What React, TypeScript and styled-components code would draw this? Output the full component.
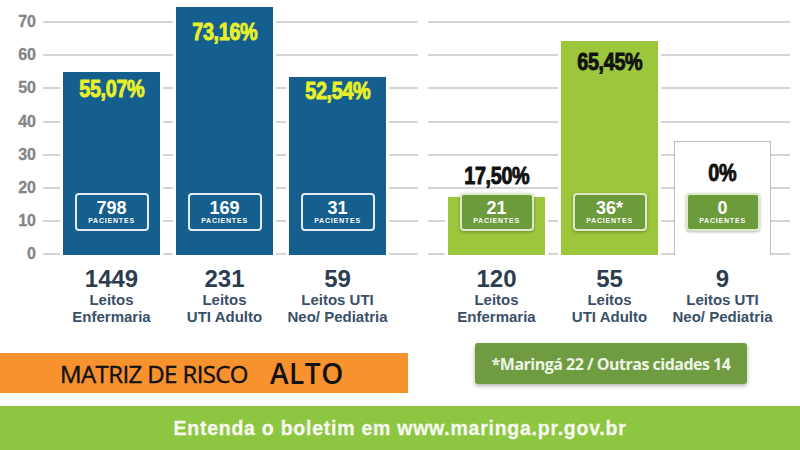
import styled, { createGlobalStyle } from "styled-components";

const GlobalStyle = createGlobalStyle`
  html, body {
    margin: 0;
    padding: 0;
    background: #fff;
  }
  body {
    font-family: "Liberation Sans", Arial, sans-serif;
  }
`;

type Tone = "blue" | "green" | "empty";

type BarData = {
  percent: string;
  height: number;
  labelTop: number;
  labelOutside?: boolean;
  patients: string;
  total: string;
  line1: string;
  line2: string;
};

const hospitalBeds: BarData[] = [
  { percent: "55,07%", height: 183, labelTop: 5, patients: "798", total: "1449", line1: "Leitos", line2: "Enfermaria" },
  { percent: "73,16%", height: 248, labelTop: 13, patients: "169", total: "231", line1: "Leitos", line2: "UTI Adulto" },
  { percent: "52,54%", height: 178, labelTop: 2, patients: "31", total: "59", line1: "Leitos UTI", line2: "Neo/ Pediatria" },
];

const privateBeds: BarData[] = [
  { percent: "17,50%", height: 58, labelTop: 0, labelOutside: true, patients: "21", total: "120", line1: "Leitos", line2: "Enfermaria" },
  { percent: "65,45%", height: 214, labelTop: 9, patients: "36*", total: "55", line1: "Leitos", line2: "UTI Adulto" },
  { percent: "0%", height: 114, labelTop: 19, patients: "0", total: "9", line1: "Leitos UTI", line2: "Neo/ Pediatria" },
];

const ticks = [70, 60, 50, 40, 30, 20, 10, 0];

const Styles = {
  Root: styled.div`
    width: 800px;
    height: 450px;
    overflow: hidden;
    display: flex;
    flex-direction: column;
    background: #fff;
  `,
  Charts: styled.section`
    display: flex;
    height: 325px;
  `,
  YAxis: styled.ul`
    list-style: none;
    margin: 0;
    padding: 5.75px 7px 0 0;
    width: 43px;
    box-sizing: border-box;
    height: 255px;
  `,
  Tick: styled.li`
    height: 33.1px;
    display: flex;
    align-items: center;
    justify-content: flex-end;
    font-size: 16px;
    font-weight: 700;
    color: #858585;
    -webkit-text-stroke: 0.3px #858585;
  `,
  Group: styled.div<{ $width: number; $gapRight: number }>`
    width: ${(p) => p.$width}px;
    margin-right: ${(p) => p.$gapRight}px;
    display: flex;
    flex-direction: column;
  `,
  Plot: styled.div`
    height: 255px;
    display: flex;
    gap: 16px;
    padding-left: 20px;
    background-image: repeating-linear-gradient(
      to top,
      #d4d4d4 0 2px,
      transparent 2px 33.1px
    );
  `,
  Slot: styled.div`
    width: 97px;
    flex: none;
    display: flex;
    flex-direction: column;
    justify-content: flex-end;
    align-items: center;
  `,
  Bar: styled.div<{ $tone: Tone }>`
    width: 100%;
    box-sizing: border-box;
    display: flex;
    flex-direction: column;
    justify-content: flex-end;
    align-items: center;
    background: ${(p) =>
      p.$tone === "blue" ? "#145f8d" : p.$tone === "green" ? "#9cc73d" : "#fff"};
    border: ${(p) => (p.$tone === "empty" ? "1.5px solid #bdbdbd" : "none")};
    border-bottom: none;
    box-shadow: ${(p) => (p.$tone === "empty" ? "none" : "0 0 0 3px #fff")};
  `,
  Percent: styled.div<{ $tone: Tone; $top: number }>`
    margin-top: ${(p) => p.$top}px;
    margin-bottom: auto;
    font-size: 23px;
    line-height: 24px;
    font-weight: 700;
    letter-spacing: -0.4px;
    white-space: nowrap;
    transform: scaleX(0.86);
    color: ${(p) => (p.$tone === "blue" ? "#e7f02a" : "#111")};
    -webkit-text-stroke: 0.9px ${(p) => (p.$tone === "blue" ? "#e7f02a" : "#111")};
  `,
  OuterPercent: styled.div`
    margin-bottom: 9px;
    font-size: 23px;
    line-height: 24px;
    font-weight: 700;
    letter-spacing: -0.4px;
    white-space: nowrap;
    transform: scaleX(0.86);
    color: #111;
    -webkit-text-stroke: 0.9px #111;
  `,
  PatientBox: styled.div<{ $tone: Tone }>`
    width: 74px;
    height: 38px;
    flex: none;
    box-sizing: border-box;
    margin-bottom: 24px;
    border-radius: 4px;
    border: 2px solid
      ${(p) => (p.$tone === "blue" ? "rgba(255,255,255,0.88)" : "rgba(240,248,228,0.85)")};
    background: ${(p) => (p.$tone === "blue" ? "transparent" : "#6b9b3b")};
    box-shadow: ${(p) => (p.$tone === "blue" ? "none" : "0 1px 3px rgba(0,0,0,0.3)")};
    display: flex;
    flex-direction: column;
    align-items: center;
    justify-content: center;
    color: #fff;
  `,
  PatientCount: styled.span`
    font-size: 18px;
    line-height: 16px;
    font-weight: 700;
  `,
  PatientLabel: styled.span`
    margin-top: 1px;
    font-size: 7px;
    line-height: 8px;
    font-weight: 900;
    letter-spacing: 0.8px;
  `,
  Captions: styled.div`
    display: flex;
    gap: 16px;
    padding-left: 20px;
  `,
  Caption: styled.div`
    width: 97px;
    flex: none;
    display: flex;
    flex-direction: column;
    align-items: center;
    white-space: nowrap;
    font-size: 15px;
    line-height: 17px;
    font-weight: 700;
    color: #3a5068;
  `,
  CaptionTotal: styled.span`
    margin-top: 12px;
    font-size: 24px;
    line-height: 24px;
    color: #2c3d4f;
  `,
  Notes: styled.section`
    margin-top: 18px;
    height: 50px;
    display: flex;
    align-items: flex-start;
  `,
  Risk: styled.div`
    width: 408px;
    height: 40px;
    margin-top: 10px;
    box-sizing: border-box;
    padding-left: 60px;
    display: flex;
    align-items: center;
    gap: 22px;
    background: #f7922f;
    color: #111;
    font-family: "Open Sans", "Liberation Sans", sans-serif;
  `,
  RiskTitle: styled.span`
    font-size: 24px;
    font-weight: 400;
    letter-spacing: -0.6px;
    -webkit-text-stroke: 0.4px #111;
  `,
  RiskLevel: styled.span`
    font-size: 28px;
    font-weight: 600;
    letter-spacing: 0.6px;
  `,
  Footnote: styled.div`
    margin-left: 67px;
    width: 272px;
    height: 41px;
    border-radius: 3px;
    background: #6f9c40;
    box-shadow: 0 2px 4px rgba(0, 0, 0, 0.3);
    display: flex;
    align-items: center;
    justify-content: center;
    color: #eef4e6;
    font-family: "Open Sans", "Liberation Sans", sans-serif;
    font-size: 16px;
    font-weight: 700;
    letter-spacing: -0.5px;
  `,
  Footer: styled.footer`
    margin-top: 13px;
    height: 44px;
    background: #8dc640;
    display: flex;
    align-items: center;
    justify-content: center;
    color: #f6f9f0;
    font-size: 19.5px;
    font-weight: 700;
    letter-spacing: 0.75px;
    -webkit-text-stroke: 0.3px #f6f9f0;
  `,
};

const ChartGroup = ({
  data,
  tone,
  width,
  gapRight,
}: {
  data: BarData[];
  tone: Tone;
  width: number;
  gapRight: number;
}) => (
  <Styles.Group $width={width} $gapRight={gapRight}>
    <Styles.Plot>
      {data.map((bar) => {
        const barTone: Tone = bar.percent === "0%" ? "empty" : tone;
        return (
          <Styles.Slot key={bar.total}>
            {bar.labelOutside && <Styles.OuterPercent>{bar.percent}</Styles.OuterPercent>}
            <Styles.Bar $tone={barTone} style={{ height: bar.height }}>
              {!bar.labelOutside && (
                <Styles.Percent $tone={tone} $top={bar.labelTop}>
                  {bar.percent}
                </Styles.Percent>
              )}
              <Styles.PatientBox $tone={tone}>
                <Styles.PatientCount>{bar.patients}</Styles.PatientCount>
                <Styles.PatientLabel>PACIENTES</Styles.PatientLabel>
              </Styles.PatientBox>
            </Styles.Bar>
          </Styles.Slot>
        );
      })}
    </Styles.Plot>
    <Styles.Captions>
      {data.map((bar) => (
        <Styles.Caption key={bar.total}>
          <Styles.CaptionTotal>{bar.total}</Styles.CaptionTotal>
          <span>{bar.line1}</span>
          <span>{bar.line2}</span>
        </Styles.Caption>
      ))}
    </Styles.Captions>
  </Styles.Group>
);

export default function App() {
  return (
    <>
      <GlobalStyle />
      <Styles.Root>
        <Styles.Charts>
          <Styles.YAxis>
            {ticks.map((t) => (
              <Styles.Tick key={t}>{t}</Styles.Tick>
            ))}
          </Styles.YAxis>
          <ChartGroup data={hospitalBeds} tone="blue" width={375} gapRight={10} />
          <ChartGroup data={privateBeds} tone="green" width={362} gapRight={0} />
        </Styles.Charts>
        <Styles.Notes>
          <Styles.Risk>
            <Styles.RiskTitle>MATRIZ DE RISCO</Styles.RiskTitle>
            <Styles.RiskLevel>ALTO</Styles.RiskLevel>
          </Styles.Risk>
          <Styles.Footnote>*Maringá 22 / Outras cidades 14</Styles.Footnote>
        </Styles.Notes>
        <Styles.Footer>Entenda o boletim em www.maringa.pr.gov.br</Styles.Footer>
      </Styles.Root>
    </>
  );
}
